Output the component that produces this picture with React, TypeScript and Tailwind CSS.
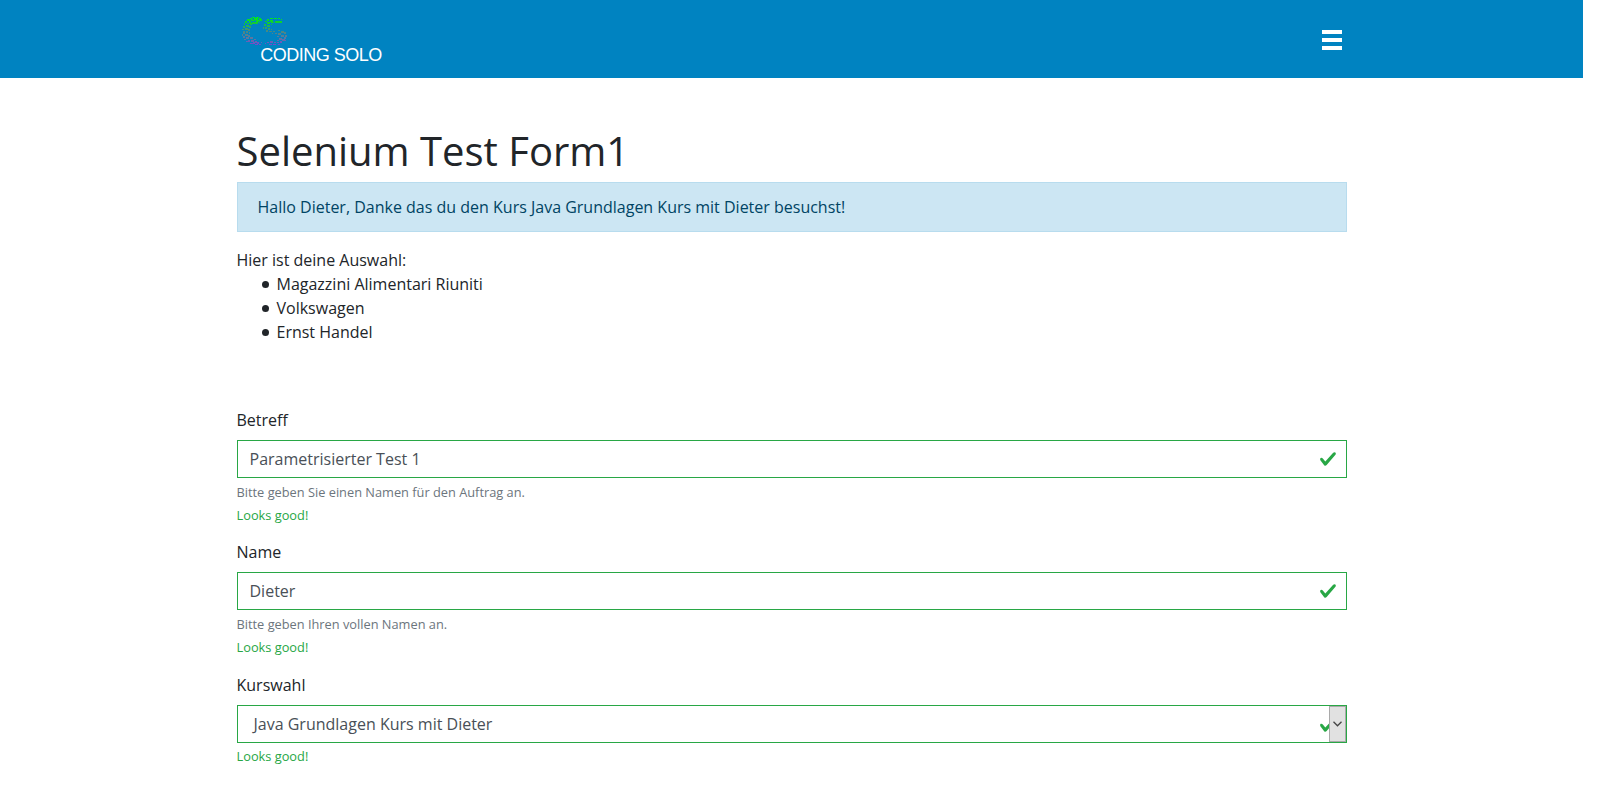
import React from "react";

// Mosaic tiles of the "CS" mark: x, y, width, height
const tiles: number[][] = [
  // C
  [11, 3, 3, 1], [15, 3, 3, 1], [9, 4, 2, 1], [13, 4, 4, 2], [18, 4, 2, 1], [6, 5, 3, 2], [10, 5, 2, 2], [15, 6, 3, 2],
  [18, 5, 3, 2], [12, 6, 2, 1], [8, 7, 2, 2], [11, 8, 3, 2], [14, 8, 3, 2], [18, 8, 1, 1], [4, 7, 2, 2], [6, 9, 2, 1],
  [9, 9, 2, 2], [3, 9, 1, 2], [5, 11, 3, 2], [2, 12, 2, 2], [8, 12, 2, 2], [4, 14, 3, 2], [1, 15, 2, 1], [7, 15, 2, 2],
  [2, 17, 2, 3], [5, 17, 2, 2], [8, 18, 1, 2], [4, 20, 3, 2], [1, 20, 1, 2], [7, 21, 2, 2], [2, 22, 2, 2],
  [5, 23, 3, 2], [9, 23, 3, 2], [3, 25, 2, 1], [7, 26, 2, 2], [10, 26, 3, 2], [5, 27, 2, 1], [13, 25, 2, 1],
  [14, 27, 2, 2], [9, 29, 3, 1], [12, 28, 2, 2], [16, 28, 2, 2], [18, 30, 2, 1], [14, 30, 3, 1], [20, 28, 1, 1],
  // S
  [29, 4, 3, 1], [33, 4, 3, 1], [37, 4, 2, 1], [40, 5, 1, 1], [26, 5, 2, 2], [29, 6, 3, 2], [34, 7, 4, 2], [38, 7, 3, 2],
  [30, 8, 3, 1], [24, 7, 2, 1], [26, 8, 3, 2], [23, 10, 2, 2], [26, 11, 3, 2], [30, 10, 1, 1], [24, 13, 2, 2],
  [27, 14, 2, 2], [22, 13, 1, 2], [25, 16, 2, 2], [28, 17, 3, 1], [30, 15, 1, 1], [32, 17, 2, 1], [31, 19, 1, 1],
  [37, 16, 2, 1], [40, 17, 3, 2], [37, 19, 3, 2], [43, 18, 2, 2], [34, 19, 2, 1], [40, 21, 3, 2], [36, 22, 2, 1],
  [44, 21, 2, 2], [43, 23, 2, 2], [38, 24, 3, 2], [41, 25, 3, 2], [44, 26, 1, 1], [36, 26, 2, 1], [39, 27, 2, 2],
  [26, 28, 2, 1], [29, 27, 3, 2], [33, 28, 2, 1], [36, 28, 2, 1], [28, 30, 3, 1], [32, 30, 3, 1], [37, 30, 2, 1],
  [24, 29, 1, 1],
];

function Logo() {
  return (
    <svg width="150" height="50" viewBox="0 0 150 50" className="block" aria-label="Coding Solo">
      <defs>
        <linearGradient id="mark" gradientUnits="userSpaceOnUse" x1="0" y1="3" x2="0" y2="31">
          <stop offset="0" stopColor="#00ed18" />
          <stop offset="0.2" stopColor="#10cf30" />
          <stop offset="0.5" stopColor="#4a8980" />
          <stop offset="0.75" stopColor="#5b78a0" />
          <stop offset="1" stopColor="#7548cf" />
        </linearGradient>
      </defs>
      <g fill="url(#mark)" shapeRendering="crispEdges">
        {tiles.map(([x, y, w, h], i) => <rect key={i} x={x} y={y} width={w} height={h} />)}
      </g>
      <text x="19.3" y="47" fontSize="18" textLength="122" fill="#fff" fontFamily="Liberation Sans, Arial, sans-serif">CODING SOLO</text>
    </svg>
  );
}

function Check({ className = "" }: { className?: string }) {
  return (
    <svg viewBox="0 0 8 8" className={"size-[18px] " + className}>
      <path fill="#28a745" d="M2.3 6.73L.6 4.53c-.4-1.04.46-1.4 1.1-.8l1.1 1.4 3.4-3.8c.6-.63 1.6-.27 1.2.7l-4 4.6c-.43.5-.8.4-1.1.1z" />
    </svg>
  );
}

function Feedback({ className = "mt-1" }: { className?: string }) {
  return <div className={"text-[12.8px] leading-[19.2px] text-[#28a745] " + className}>Looks good!</div>;
}

function TextField({ label, value, help, feedbackClass }: { label: string; value: string; help: string; feedbackClass: string }) {
  return (
    <div className="mb-4">
      <div className="mb-2">{label}</div>
      <div className="flex h-[38px] items-center justify-between border border-[#28a745] pr-[9px] pl-3 text-[#495057]">
        <span>{value}</span>
        <Check className="mb-px" />
      </div>
      <div className="pt-[5px] text-[12.8px] leading-[19.2px] text-[#6c757d]">{help}</div>
      <Feedback className={feedbackClass} />
    </div>
  );
}

const choices = ["Magazzini Alimentari Riuniti", "Volkswagen", "Ernst Handel"];

export default function App() {
  return (
    <div className="h-[786px] w-full overflow-hidden bg-white font-['Open_Sans',sans-serif] text-base leading-6 text-[#212529]">
      <div className="w-[1583px]">
        <header className="h-[78px] bg-[#0083c1]">
          <div className="mx-auto flex h-full w-[1110px] items-center justify-between pr-[5px] pl-1">
            <Logo />
            <div className="mt-[2px] flex w-5 flex-col gap-1">
              <div className="h-1 bg-white" />
              <div className="h-1 bg-white" />
              <div className="h-1 bg-white" />
            </div>
          </div>
        </header>
        <main className="mx-auto w-[1110px] pt-[49px]">
          <h1 className="mb-[7px] text-[40px] leading-[48px]">Selenium Test Form1</h1>
          <div className="mb-4 border border-[#b8dcee] bg-[#cce6f3] px-5 py-3 text-[#004464]">
            Hallo Dieter, Danke das du den Kurs Java Grundlagen Kurs mit Dieter besuchst!
          </div>
          <div>Hier ist deine Auswahl:</div>
          <ul className="mb-16 pl-[25px]">
            {choices.map((choice) => (
              <li key={choice} className="flex items-center gap-2">
                <span className="size-[7px] rounded-full bg-[#212529]" />
                {choice}
              </li>
            ))}
          </ul>
          <TextField label="Betreff" value="Parametrisierter Test 1" help="Bitte geben Sie einen Namen für den Auftrag an." feedbackClass="pt-[4px] -mb-px" />
          <TextField label="Name" value="Dieter" help="Bitte geben Ihren vollen Namen an." feedbackClass="pt-[3px]" />
          <div>
            <div className="mb-2">Kurswahl</div>
            <div className="flex h-[38px] items-center border border-[#28a745] pl-4 text-[#495057]">
              <span className="grow">Java Grundlagen Kurs mit Dieter</span>
              <div className="flex w-[10px] overflow-hidden pt-[2px]">
                <Check className="shrink-0" />
              </div>
              <div className="flex h-full w-[17px] items-center justify-center border border-[#a9a9a9] bg-[#e1e1e1]">
                <svg width="9" height="6" viewBox="0 0 9 6" fill="none" stroke="#444" strokeWidth="1.3">
                  <path d="M.5 .8L4.5 4.8L8.5 .8" />
                </svg>
              </div>
            </div>
            <Feedback />
          </div>
        </main>
      </div>
    </div>
  );
}
